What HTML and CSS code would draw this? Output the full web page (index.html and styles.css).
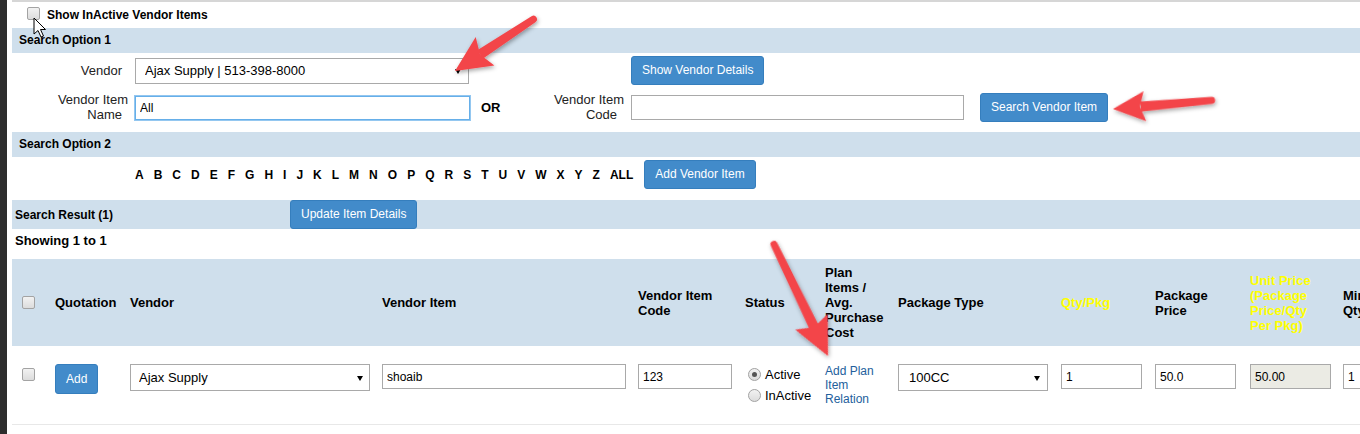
FILE: index.html
```html
<!DOCTYPE html>
<html lang="en">

<head>
    <meta charset="UTF-8">
    <meta name="viewport" content="width=device-width, initial-scale=1.0">
    <title>Vendor Items</title>
    <link rel="stylesheet" href="styles.css">
</head>

<body>
    <div class="page">
        <!-- Show inactive -->
        <div class="inactive-row">
            <input type="checkbox" id="showInactive">
            <label for="showInactive">Show InActive Vendor Items</label>
        </div>

        <!-- Search Option 1 -->
        <div class="bar">Search Option 1</div>
        <div class="search-one">
            <div class="lbl">Vendor</div>
            <div class="select-wrap top-select">
                <select>
                    <option>Ajax Supply | 513-398-8000</option>
                </select>
            </div>
            <div></div>
            <div></div>
            <div><button class="btn">Show Vendor Details</button></div>
            <div></div>

            <div class="lbl"><span class="first">Vendor Item</span><br>Name</div>
            <div><input type="text" class="text name-input" value="All"></div>
            <div class="or">OR</div>
            <div class="lbl code-lbl"><span class="first">Vendor Item</span><br>Code</div>
            <div><input type="text" class="text code-input"></div>
            <div><button class="btn">Search Vendor Item</button></div>
        </div>

        <!-- Search Option 2 -->
        <div class="bar">Search Option 2</div>
        <div class="letters">
            <a href="#">A</a><a href="#">B</a><a href="#">C</a><a href="#">D</a><a href="#">E</a>
            <a href="#">F</a><a href="#">G</a><a href="#">H</a><a href="#">I</a><a href="#">J</a>
            <a href="#">K</a><a href="#">L</a><a href="#">M</a><a href="#">N</a><a href="#">O</a>
            <a href="#">P</a><a href="#">Q</a><a href="#">R</a><a href="#">S</a><a href="#">T</a>
            <a href="#">U</a><a href="#">V</a><a href="#">W</a><a href="#">X</a><a href="#">Y</a>
            <a href="#">Z</a><a href="#">ALL</a>
            <button class="btn add-vendor">Add Vendor Item</button>
        </div>

        <!-- Search Result -->
        <div class="bar result-bar">
            <span class="result-title">Search Result (1)</span>
            <button class="btn">Update Item Details</button>
        </div>
        <div class="showing">Showing 1 to 1</div>

        <table class="results">
            <colgroup>
                <col style="width: 39px">
                <col style="width: 75px">
                <col style="width: 252px">
                <col style="width: 256px">
                <col style="width: 107px">
                <col style="width: 80px">
                <col style="width: 73px">
                <col style="width: 163px">
                <col style="width: 94px">
                <col style="width: 95px">
                <col style="width: 93px">
                <col style="width: 52px">
            </colgroup>
            <thead>
                <tr>
                    <th class="cb-cell"><input type="checkbox"></th>
                    <th>Quotation</th>
                    <th>Vendor</th>
                    <th>Vendor Item</th>
                    <th>Vendor Item Code</th>
                    <th>Status</th>
                    <th class="plan">Plan Items / Avg. Purchase Cost</th>
                    <th>Package Type</th>
                    <th class="yellow">Qty/Pkg</th>
                    <th class="narrow">Package Price</th>
                    <th class="yellow narrow">Unit Price (Package Price/Qty Per Pkg)</th>
                    <th>Min Qty</th>
                </tr>
            </thead>
            <tbody>
                <tr>
                    <td class="cb-cell"><input type="checkbox"></td>
                    <td><button class="btn add-btn">Add</button></td>
                    <td>
                        <div class="select-wrap vendor-select">
                            <select>
                                <option>Ajax Supply</option>
                            </select>
                        </div>
                    </td>
                    <td><input type="text" class="text item-input" value="shoaib"></td>
                    <td><input type="text" class="text code-cell" value="123"></td>
                    <td>
                        <label class="radio"><input type="radio" name="status" checked> Active</label>
                        <label class="radio"><input type="radio" name="status"> InActive</label>
                    </td>
                    <td class="plan"><a href="#" class="plan-link">Add Plan Item Relation</a></td>
                    <td>
                        <div class="select-wrap pkg-select">
                            <select>
                                <option>100CC</option>
                            </select>
                        </div>
                    </td>
                    <td><input type="text" class="text small-input" value="1"></td>
                    <td><input type="text" class="text small-input" value="50.0"></td>
                    <td><input type="text" class="text small-input" value="50.00" disabled></td>
                    <td><input type="text" class="text small-input" value="1"></td>
                </tr>
            </tbody>
        </table>
    </div>

    <!-- Mouse pointer -->
    <svg class="cursor" width="14" height="22" viewBox="0 0 14 22">
        <path d="M1 1 L1 17 L5 13.5 L8 20 L10.5 19 L7.5 12.5 L12.5 12.5 Z" fill="#fff" stroke="#000" stroke-width="1" stroke-linejoin="round"/>
    </svg>

    <!-- Annotation arrows -->
    <svg class="arrows" width="1360" height="434" viewBox="0 0 1360 434">
        <defs>
            <filter id="shadow" x="-20%" y="-20%" width="140%" height="140%">
                <feDropShadow dx="1" dy="2" stdDeviation="2" flood-color="#000" flood-opacity="0.35"/>
            </filter>
        </defs>
        <g fill="#f3454a" filter="url(#shadow)">
            <g transform="translate(455 71) rotate(146.6)">
                <path d="M-30 -5 L-94 -3.5 A3.5 3.5 0 0 0 -94 3.5 L-30 5 Z"/>
                <path d="M0 0 L-36 -17 L-30 0 L-36 17 Z"/>
            </g>
            <g transform="translate(1113 109) rotate(175)">
                <path d="M-28 -5 L-99 -3.5 A3.5 3.5 0 0 0 -99 3.5 L-28 5 Z"/>
                <path d="M0 0 L-32 -15 L-27 0 L-32 15 Z"/>
            </g>
            <g transform="translate(828 356) rotate(64.2)">
                <path d="M-30 -5 L-124 -3.5 A3.5 3.5 0 0 0 -124 3.5 L-30 5 Z"/>
                <path d="M0 0 L-38 -18 L-32 0 L-38 18 Z"/>
            </g>
        </g>
    </svg>
</body>

</html>
```

FILE: styles.css
```css
/* Page colours */
:root {
    --bar-bg: #cfdfec;
    --btn-bg: #428bca;
    --btn-border: #357ebd;
    --input-border: #a9a9a9;
    --link-color: #23609c;
}

html {
    overflow: hidden;
}

body {
    font-family: 'Liberation Sans', Arial, sans-serif;
    margin: 0;
    padding: 0;
    background-color: #fff;
    color: #000;
    border-left: 7px solid #2d2d2d;
    min-height: 434px;
    position: relative;
}

.page {
    margin-left: 5px;
    border-top: 2px solid #d6d6d6;
}

/* Old style grey checkboxes and radios */
input[type="checkbox"],
input[type="radio"] {
    -webkit-appearance: none;
    appearance: none;
    width: 13px;
    height: 13px;
    margin: 0;
    border: 1px solid #a3a3a3;
    border-radius: 2px;
    background: linear-gradient(#f2f2f2, #dcdcdc);
    box-sizing: border-box;
    position: relative;
}

input[type="radio"] {
    border-radius: 50%;
}

input[type="radio"]:checked::after {
    content: "";
    position: absolute;
    left: 3px;
    top: 3px;
    width: 5px;
    height: 5px;
    border-radius: 50%;
    background: #555;
}

/* Top checkbox */
.inactive-row {
    display: flex;
    align-items: center;
    height: 26px;
    padding-left: 15px;
    font-size: 12px;
    font-weight: bold;
}

.inactive-row input {
    margin: -3px 7px 0 0;
}

/* Section bars */
.bar {
    background-color: var(--bar-bg);
    font-size: 12px;
    font-weight: bold;
    height: 25px;
    line-height: 25px;
    padding-left: 7px;
}

.result-bar {
    display: flex;
    align-items: center;
    height: 29px;
    line-height: normal;
    padding-left: 3px;
}

.result-title {
    width: 275px;
}

/* Buttons */
.btn {
    font-family: 'Liberation Sans', Arial, sans-serif;
    font-size: 12px;
    line-height: 17px;
    color: #fff;
    background-color: var(--btn-bg);
    border: 1px solid var(--btn-border);
    border-radius: 3px;
    padding: 5px 10px;
    cursor: pointer;
    white-space: nowrap;
}

/* Search option 1 */
.search-one {
    display: grid;
    grid-template-columns: 123px 335px 76px 85px 349px auto;
    grid-template-rows: 29px 30px;
    row-gap: 7px;
    align-items: center;
    padding: 3px 0 10px;
    font-size: 13px;
}

.lbl {
    text-align: right;
    padding-right: 13px;
    color: #222;
    line-height: 15px;
}

.lbl .first {
    margin-right: -6px;
}

.code-lbl {
    padding-right: 14px;
}

.code-lbl .first {
    margin-right: -7px;
}

.or {
    font-weight: bold;
    padding-left: 11px;
}

.text {
    font-family: 'Liberation Sans', Arial, sans-serif;
    font-size: 12px;
    color: #000;
    border: 1px solid var(--input-border);
    background: #fff;
    padding: 0 4px;
    box-sizing: border-box;
    display: block;
    margin: 0;
}

.text:disabled {
    background-color: #ebebe4;
}

.name-input {
    width: 335px;
    height: 24px;
    border-color: #66afe9;
    box-shadow: 0 0 0 1px rgba(102, 175, 233, 0.7);
    margin-top: 2px;
}

.code-input {
    width: 333px;
    height: 25px;
}

/* Selects */
.select-wrap {
    position: relative;
    display: inline-block;
    vertical-align: top;
}

.select-wrap select {
    -webkit-appearance: none;
    appearance: none;
    font-family: 'Liberation Sans', Arial, sans-serif;
    font-size: 13px;
    color: #000;
    background: #fff;
    border: 1px solid var(--input-border);
    border-radius: 0;
    padding: 0 0 0 8px;
    margin: 0;
    width: 100%;
    height: 100%;
    display: block;
}

.select-wrap::after {
    content: "";
    position: absolute;
    top: 50%;
    right: 8px;
    margin-top: -2px;
    border-left: 3.5px solid transparent;
    border-right: 3.5px solid transparent;
    border-top: 5px solid #000;
}

.top-select {
    width: 334px;
    height: 26px;
}

.top-select select {
    padding-left: 9px;
}

/* Letters */
.letters {
    display: flex;
    align-items: center;
    gap: 10px;
    padding: 3px 0 11px 123px;
    font-size: 12px;
    font-weight: bold;
}

.letters a {
    color: #000;
    text-decoration: none;
}

.add-vendor {
    margin-left: 1px;
}

.showing {
    height: 30px;
    line-height: 24px;
    font-size: 13px;
    font-weight: bold;
    padding-left: 3px;
}

/* Results table */
.results {
    table-layout: fixed;
    border-collapse: collapse;
    width: 1379px;
}

.results th {
    background-color: var(--bar-bg);
    font-size: 13px;
    font-weight: bold;
    line-height: 15px;
    text-align: left;
    vertical-align: middle;
    padding: 6px 4px;
    height: 75px;
}

.results th.plan,
.results td.plan {
    padding-right: 8px;
}

.results th.narrow {
    padding-right: 12px;
}

.results th.yellow {
    color: #ffff00;
}

.results td {
    vertical-align: top;
    padding: 18px 4px;
    font-size: 13px;
    border-bottom: 1px solid #e8e8e8;
}

.results .cb-cell {
    padding-left: 10px;
}

.results th.cb-cell input {
    display: block;
}

.results td.cb-cell input {
    margin-top: 4px;
}

.add-btn {
    height: 30px;
}

.vendor-select {
    width: 240px;
    height: 27px;
}

.vendor-select::after {
    right: 7px;
}

.item-input {
    width: 244px;
    height: 25px;
}

.code-cell {
    width: 94px;
    height: 25px;
}

.pkg-select {
    width: 150px;
    height: 27px;
}

.pkg-select select {
    padding-left: 10px;
}

.small-input {
    width: 81px;
    height: 25px;
}

.radio {
    display: flex;
    align-items: center;
    height: 21px;
    white-space: nowrap;
}

.radio input {
    margin: 0 4px 0 3px;
}

.plan-link {
    display: block;
    font-size: 12px;
    line-height: 14px;
    color: var(--link-color);
    text-decoration: none;
}

/* Overlays */
.cursor {
    position: absolute;
    left: 26px;
    top: 17px;
}

.arrows {
    position: absolute;
    left: -7px;
    top: 0;
    pointer-events: none;
}
```
